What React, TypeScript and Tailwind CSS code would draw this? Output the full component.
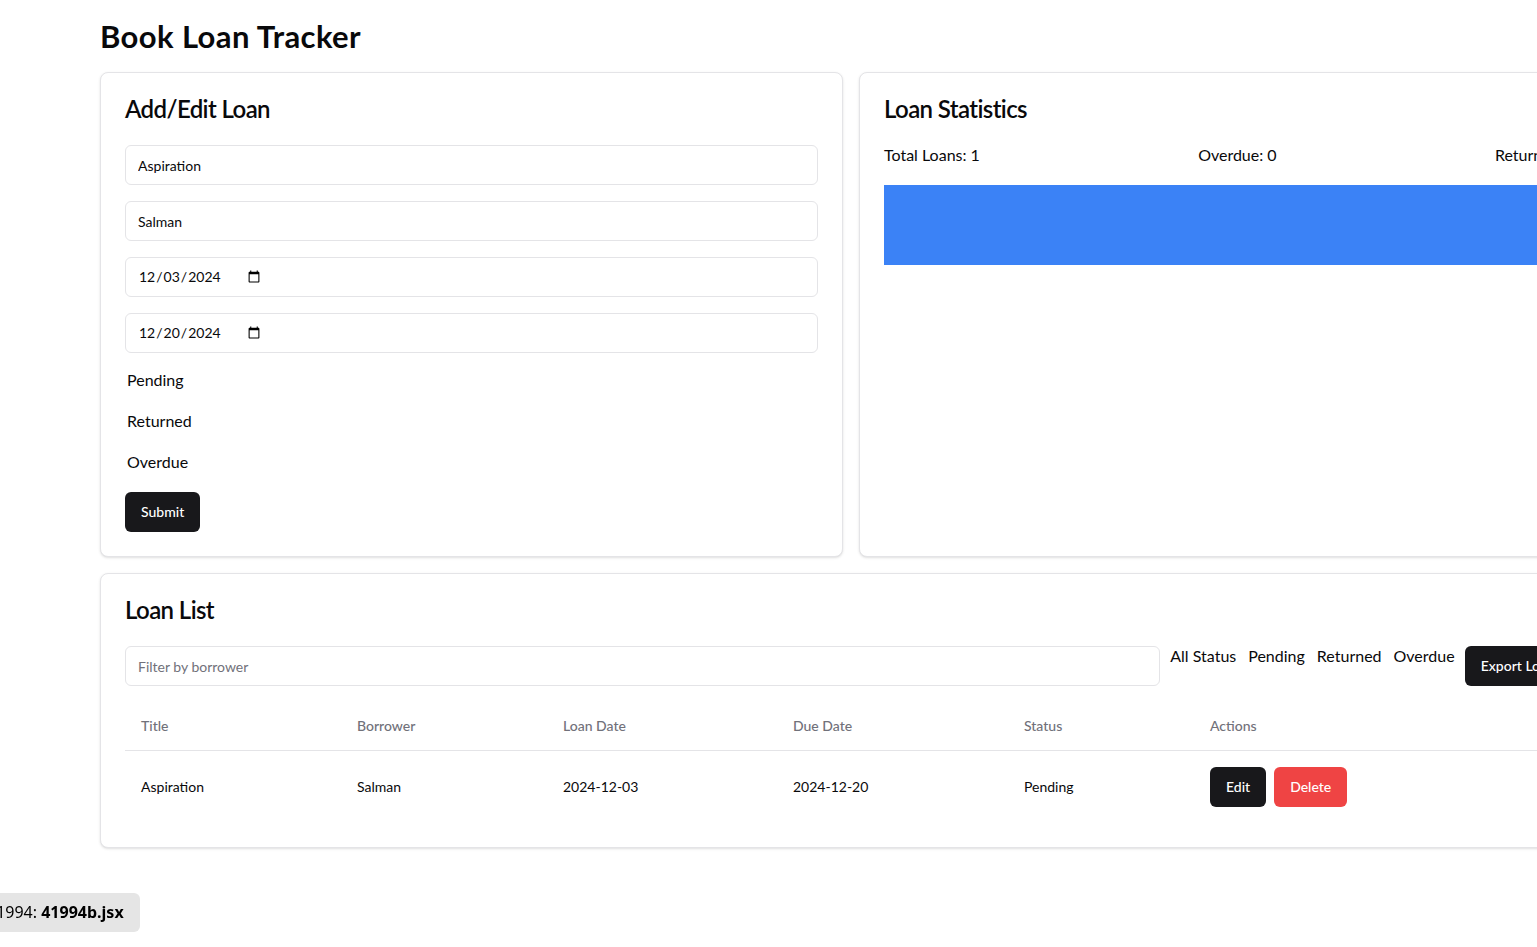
import { useState } from "react";

// ─── Data ─────────────────────────────────────────────────────────────────────

type Loan = {
  id: number;
  title: string;
  borrower: string;
  loanDate: string;
  dueDate: string;
  status: "Pending" | "Returned" | "Overdue";
};

const loans: Loan[] = [
  {
    id: 1,
    title: "Aspiration",
    borrower: "Salman",
    loanDate: "2024-12-03",
    dueDate: "2024-12-20",
    status: "Pending",
  },
];

const statuses = ["Pending", "Returned", "Overdue"];

const inputCls =
  "flex h-10 w-full rounded-md border border-[#e4e4e7] bg-white px-3 py-2 text-sm text-[#09090b] outline-none placeholder:text-[#71717a]";

// ─── Card ─────────────────────────────────────────────────────────────────────

function Card({ title, children, className = "" }: { title: string; children: React.ReactNode; className?: string }) {
  return (
    <div className={`rounded-lg border border-[#e4e4e7] bg-white shadow-sm ${className}`}>
      <div className="p-6">
        <h2 className="text-2xl font-semibold leading-none tracking-tight text-[#09090b]">{title}</h2>
      </div>
      <div className="px-6 pb-6">{children}</div>
    </div>
  );
}

// ─── App ──────────────────────────────────────────────────────────────────────

export default function App() {
  const [title, setTitle] = useState("Aspiration");
  const [borrower, setBorrower] = useState("Salman");
  const [loanDate, setLoanDate] = useState("2024-12-03");
  const [dueDate, setDueDate] = useState("2024-12-20");
  const [filter, setFilter] = useState("");

  const total = loans.length;
  const overdue = loans.filter((l) => l.status === "Overdue").length;
  const returned = loans.filter((l) => l.status === "Returned").length;

  return (
    <div className="h-[947px] w-[1537px] overflow-hidden bg-white font-['Lato',sans-serif] text-[#09090b]">
      <div className="ml-[100px] w-[1502px] pt-[18px]">
        <h1 className="mb-[18px] text-[31px] leading-9 font-bold tracking-[0.4px]">Book Loan Tracker</h1>

        <div className="grid grid-cols-2 gap-4">
          {/* Form */}
          <Card title="Add/Edit Loan">
            <div className="flex flex-col gap-4">
              <input className={inputCls} value={title} onChange={(e) => setTitle(e.target.value)} />
              <input className={inputCls} value={borrower} onChange={(e) => setBorrower(e.target.value)} />
              <input type="date" className={inputCls} value={loanDate} onChange={(e) => setLoanDate(e.target.value)} />
              <input type="date" className={inputCls} value={dueDate} onChange={(e) => setDueDate(e.target.value)} />
              {statuses.map((s) => (
                <div key={s} className="-mt-0.5 mb-0.5 pl-0.5 text-base leading-[25px]">
                  {s}
                </div>
              ))}
              <div>
                <button
                  type="button"
                  className="h-10 rounded-md bg-[#18181b] px-4 text-sm font-medium text-white"
                >
                  Submit
                </button>
              </div>
            </div>
          </Card>

          {/* Stats */}
          <Card title="Loan Statistics">
            <div className="-mt-0.5 mb-4 flex justify-between pb-0.5 text-base leading-6">
              <span>Total Loans: {total}</span>
              <span>Overdue: {overdue}</span>
              <span>Returned: {returned}</span>
            </div>
            <div className="h-20 w-full bg-[#3b82f6]" />
          </Card>
        </div>

        {/* List */}
        <Card title="Loan List" className="mt-4">
          <div className="mb-4 flex items-start gap-[10px]">
            <input
              className={`${inputCls} flex-1`}
              placeholder="Filter by borrower"
              value={filter}
              onChange={(e) => setFilter(e.target.value)}
            />
            <div className="-mt-0.5 flex gap-3 text-base leading-6">
              <span>All Status</span>
              {statuses.map((s) => (
                <span key={s}>{s}</span>
              ))}
            </div>
            <button
              type="button"
              className="h-10 shrink-0 rounded-md bg-[#18181b] px-4 text-sm font-medium text-white"
            >
              Export Loans
            </button>
          </div>

          <table className="w-full table-fixed text-sm">
            <colgroup>
              <col className="w-[216px]" />
              <col className="w-[206px]" />
              <col className="w-[230px]" />
              <col className="w-[231px]" />
              <col className="w-[186px]" />
              <col />
            </colgroup>
            <thead>
              <tr className="border-b border-[#e4e4e7]">
                {["Title", "Borrower", "Loan Date", "Due Date", "Status", "Actions"].map((h) => (
                  <th key={h} className="h-12 px-4 text-left align-middle font-medium text-[#71717a]">
                    {h}
                  </th>
                ))}
              </tr>
            </thead>
            <tbody>
              {loans
                .filter((l) => l.borrower.toLowerCase().includes(filter.toLowerCase()))
                .map((l) => (
                  <tr key={l.id}>
                    <td className="p-4 align-middle">{l.title}</td>
                    <td className="p-4 align-middle">{l.borrower}</td>
                    <td className="p-4 align-middle">{l.loanDate}</td>
                    <td className="p-4 align-middle">{l.dueDate}</td>
                    <td className="p-4 align-middle">{l.status}</td>
                    <td className="p-4 align-middle">
                      <div className="flex gap-2">
                        <button type="button" className="h-10 rounded-md bg-[#18181b] px-4 text-sm font-medium text-white">
                          Edit
                        </button>
                        <button type="button" className="h-10 rounded-md bg-[#ef4444] px-4 text-sm font-medium text-white">
                          Delete
                        </button>
                      </div>
                    </td>
                  </tr>
                ))}
            </tbody>
          </table>
        </Card>
      </div>

      {/* file badge */}
      <div className="fixed bottom-[15px] left-[-13px] rounded-md bg-[#e5e5e5] py-2 pl-0 pr-4 font-['Noto_Sans',sans-serif] text-base leading-[23px] text-black">
        41994: <b>41994b.jsx</b>
      </div>
    </div>
  );
}
